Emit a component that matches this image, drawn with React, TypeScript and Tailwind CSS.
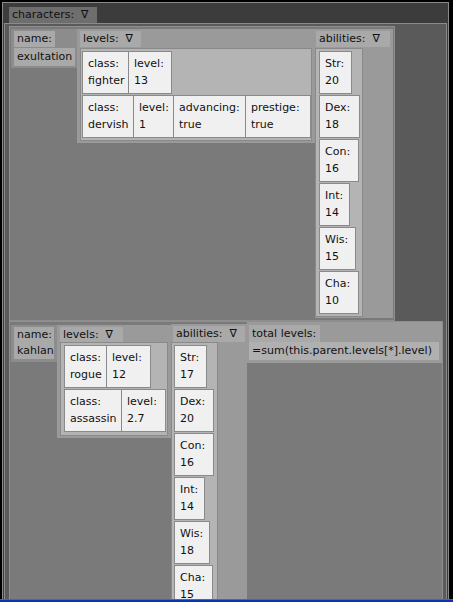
type Field = { label: string; value: string; w: string }

const item1Levels: Field[][] = [
  [
    { label: 'class:', value: 'fighter', w: 'w-[46px]' },
    { label: 'level:', value: '13', w: 'w-[42px]' },
  ],
  [
    { label: 'class:', value: 'dervish', w: 'w-[51px]' },
    { label: 'level:', value: '1', w: 'w-[40px]' },
    { label: 'advancing:', value: 'true', w: 'w-[72px]' },
    { label: 'prestige:', value: 'true', w: 'w-[64px]' },
  ],
]

const item2Levels: Field[][] = [
  [
    { label: 'class:', value: 'rogue', w: 'w-[42px]' },
    { label: 'level:', value: '12', w: 'w-[43px]' },
  ],
  [
    { label: 'class:', value: 'assassin', w: 'w-[57px]' },
    { label: 'level:', value: '2.7', w: 'w-[43px]' },
  ],
]

const item1Abilities: Field[] = [
  { label: 'Str:', value: '20', w: 'w-[33px]' },
  { label: 'Dex:', value: '18', w: 'w-[41px]' },
  { label: 'Con:', value: '16', w: 'w-[40px]' },
  { label: 'Int:', value: '14', w: 'w-[31px]' },
  { label: 'Wis:', value: '15', w: 'w-[37px]' },
  { label: 'Cha:', value: '10', w: 'w-[40px]' },
]

const item2Abilities: Field[] = [
  { label: 'Str:', value: '17', w: 'w-[33px]' },
  { label: 'Dex:', value: '20', w: 'w-[40px]' },
  { label: 'Con:', value: '16', w: 'w-[40px]' },
  { label: 'Int:', value: '14', w: 'w-[31px]' },
  { label: 'Wis:', value: '18', w: 'w-[36px]' },
  { label: 'Cha:', value: '15', w: 'w-[39px]' },
]

// label over value, used inside a row and alone in the abilities list
const CellBody = ({ f }: { f: Field }) => (
  <>
    <div className="leading-[17px]">{f.label}</div>
    <div className="leading-[17px]">{f.value}</div>
  </>
)

const LevelRow = ({ row }: { row: Field[] }) => (
  <div className="flex h-[43px] border border-[#8a8a8a] bg-[#f0f0f0] divide-x divide-[#8a8a8a]">
    {row.map((f, i) => (
      <div key={i} className={`${f.w} pl-[5px] pt-[3px] whitespace-nowrap`}>
        <CellBody f={f} />
      </div>
    ))}
  </div>
)

const AbilityCell = ({ f }: { f: Field }) => (
  <div className={`${f.w} h-[43px] shrink-0 border border-[#8a8a8a] bg-[#f0f0f0] pl-[5px] pt-[3px] whitespace-nowrap`}>
    <CellBody f={f} />
  </div>
)

export default function App() {
  return (
    <div className="w-[453px] h-[602px] bg-black flex flex-col overflow-hidden font-['DejaVu_Sans',sans-serif] text-[11px] text-[#111]">
      {/* characters frame */}
      <div className="ml-[2px] mt-[2px] w-[447px] flex-1 min-h-0 flex flex-col border border-b-0 border-[#8a8a8a] bg-[#3c3c3c] overflow-hidden">
        <div className="ml-[6px] mt-[4px] w-[88px] h-[16px] leading-[16px] pl-[3px] bg-[#6e6e6e] whitespace-pre shrink-0">
          characters:  ∇
        </div>

        <div className="mx-px flex-1 min-h-0 flex flex-col border border-b-0 border-[#8a8a8a] bg-[#5a5a5a] pl-[4px] pt-[2px] overflow-hidden">
          {/* exultation */}
          <div className="w-[386px] h-[295px] shrink-0 flex items-start border border-[#8e8e8e] bg-[#7a7a7a] pt-[2px] pl-px">
            <div className="w-[66px] bg-[#8c8c8c] pt-[2px] pl-[3px] pb-[2px]">
              <div className="w-[41px] h-[16px] leading-[16px] bg-[#a9a9a9] pl-[3px]">name:</div>
              <div className="mt-px w-[61px] h-[18px] leading-[18px] bg-[#a9a9a9] pl-[3px]">exultation</div>
            </div>

            <div className="w-[238px] bg-[#9a9a9a] pt-[2px] pl-[3px] pb-[2px]">
              <div className="w-[61px] h-[16px] leading-[16px] bg-[#a9a9a9] pl-[3px] whitespace-pre">levels:  ∇</div>
              <div className="mt-px w-[232px] flex flex-col items-start gap-px border border-[#8a8a8a] bg-[#b4b4b4] pl-px pt-[2px] pb-[2px]">
                {item1Levels.map((row, i) => (
                  <LevelRow key={i} row={row} />
                ))}
              </div>
            </div>

            <div className="w-[78px] bg-[#9a9a9a] pt-[2px] pb-px">
              <div className="ml-px w-[74px] h-[16px] leading-[16px] bg-[#a9a9a9] pl-[3px] whitespace-pre">abilities:  ∇</div>
              <div className="mt-px w-[48px] flex flex-col items-start gap-px border border-[#8a8a8a] bg-[#b4b4b4] pl-[3px] pt-[2px] pb-[2px]">
                {item1Abilities.map((f, i) => (
                  <AbilityCell key={i} f={f} />
                ))}
              </div>
            </div>
          </div>

          {/* kahlan */}
          <div className="w-[434px] flex-1 min-h-0 flex items-start border border-b-0 border-[#8e8e8e] bg-[#7a7a7a] pl-px overflow-hidden">
            <div className="mt-[3px] w-[46px] bg-[#8c8c8c] pt-[2px] pl-[3px] pb-[3px]">
              <div className="w-[40px] h-[16px] leading-[16px] bg-[#a9a9a9] pl-[3px]">name:</div>
              <div className="w-[40px] h-[16px] leading-[16px] bg-[#a9a9a9] pl-[3px]">kahlan</div>
            </div>

            <div className="mt-[3px] w-[114px] bg-[#9a9a9a] pt-[2px] pl-[3px] pb-[2px]">
              <div className="w-[63px] h-[15px] leading-[15px] bg-[#a9a9a9] pl-[3px] whitespace-pre">levels:  ∇</div>
              <div className="w-[108px] flex flex-col items-start gap-px border border-[#8a8a8a] bg-[#b4b4b4] pl-[3px] pt-[2px] pb-[3px]">
                {item2Levels.map((row, i) => (
                  <LevelRow key={i} row={row} />
                ))}
              </div>
            </div>

            <div className="mt-[2px] w-[76px] bg-[#9a9a9a] pt-[2px]">
              <div className="ml-[2px] w-[72px] h-[16px] leading-[16px] bg-[#a9a9a9] pl-[3px] whitespace-pre">abilities:  ∇</div>
              <div className="w-[47px] flex flex-col items-start gap-px border border-[#8a8a8a] bg-[#b4b4b4] pl-[2px] pt-[2px] pb-[2px]">
                {item2Abilities.map((f, i) => (
                  <AbilityCell key={i} f={f} />
                ))}
              </div>
            </div>

            <div className="flex-1 bg-[#9a9a9a] pt-[3px] pl-[2px] pb-[3px]">
              <div className="w-[71px] h-[17px] leading-[17px] bg-[#a9a9a9] pl-[3px]">total levels:</div>
              <div className="w-[190px] h-[18px] leading-[18px] bg-[#b0b0b0] pl-[3px] whitespace-nowrap">
                =sum(this.parent.levels[*].level)
              </div>
            </div>
          </div>
        </div>
      </div>

      {/* bottom bar */}
      <div className="h-[3px] shrink-0 border-t border-[#3a66d6] bg-[#0b34b0]" />
    </div>
  )
}
